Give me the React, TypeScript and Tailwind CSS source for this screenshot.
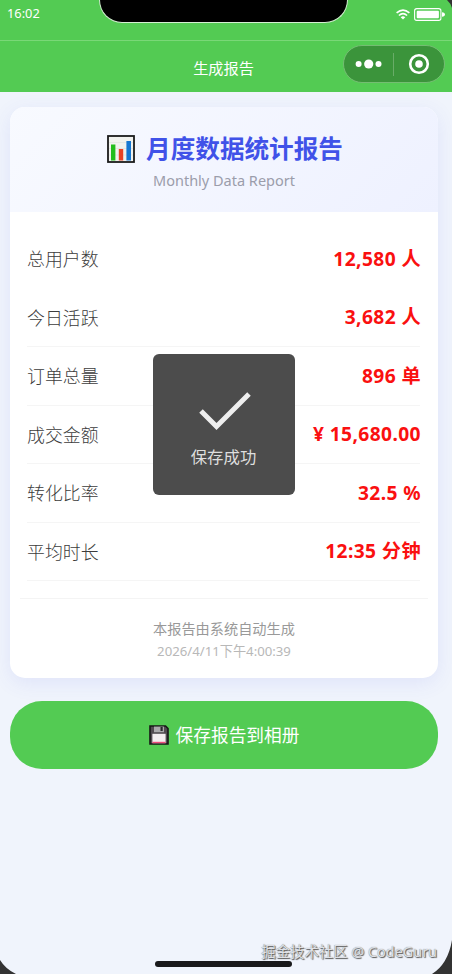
interface Stat { label: string; value: string; line: boolean; }

const stats: Stat[] = [
  { label: '总用户数', value: '12,580 人', line: false },
  { label: '今日活跃', value: '3,682 人', line: true },
  { label: '订单总量', value: '896 单', line: true },
  { label: '成交金额', value: '¥ 15,680.00', line: true },
  { label: '转化比率', value: '32.5 %', line: true },
  { label: '平均时长', value: '12:35 分钟', line: true },
];

function ChartIcon() {
  return (
    <svg className="w-[28px] h-[28px]" viewBox="0 0 28 28">
      <rect x="1" y="1" width="26" height="26" fill="#f1f2ee" stroke="#1b1b1b" strokeWidth="1.8" />
      <path d="M2 7.5h24M2 13.5h24M2 20h24" stroke="#dfe2df" strokeWidth=".7" />
      <rect x="4" y="9.5" width="4.4" height="16" fill="#23bd1c" />
      <rect x="11.8" y="14" width="4.4" height="11.5" fill="#ea4224" />
      <rect x="19.4" y="6" width="4.6" height="19.5" fill="#1677d2" />
    </svg>
  );
}

function DiskIcon() {
  return (
    <svg className="w-[20px] h-[20px]" viewBox="0 0 20 20">
      <path d="M1 1h15.5L19 3.5V19H1z" fill="#514b51" stroke="#171717" strokeWidth="1.6" />
      <rect x="5" y="1.6" width="10" height="5.6" fill="#a9a9ab" />
      <rect x="11.5" y="2" width="2.2" height="4" fill="#29292b" />
      <rect x="3.4" y="8.8" width="13.2" height="9.4" fill="#f3eef0" />
      <rect x="3.4" y="16.8" width="13.2" height="1.4" fill="#ef4c79" />
    </svg>
  );
}

function StatusBar() {
  return (
    <div className="relative flex h-[41px] justify-between border-b border-[#79d877] pl-[7px] pr-[7px] text-white">
      <span className="mt-[4px] text-[12.8px] leading-[19px]">16:02</span>
      <div className="absolute left-[99px] -top-px h-[24px] w-[249px] rounded-b-[23px] border border-t-0 border-[#d4f0d2] bg-black" />
      <div className="mt-[8px] flex h-[13px] items-center gap-[4px]">
        <svg className="w-[14px] h-[11px]" viewBox="0 0 14 11" fill="none" stroke="white" strokeWidth="1.6">
          <path d="M.6 3.9Q7-1.7 13.4 3.9M2.9 6.5Q7 2.9 11.1 6.5" />
          <path d="M4.7 8.2Q7 6.3 9.3 8.2L7 10.5z" fill="white" stroke="none" />
        </svg>
        <svg className="w-[31px] h-[13px]" viewBox="0 0 31 13">
          <rect x=".6" y=".6" width="26.3" height="11.8" rx="2.2" fill="none" stroke="white" strokeWidth="1.1" />
          <rect x="2.7" y="2.8" width="22.2" height="7.4" rx="1" fill="white" />
          <path d="M28 4.2q3 .4 3 2.3t-3 2.3z" fill="white" />
        </svg>
      </div>
    </div>
  );
}

function Capsule() {
  return (
    <div className="absolute right-[7px] top-[4px] flex h-[38px] w-[102px] items-center rounded-full border border-[#74bd72] bg-[#3b943b]">
      <svg className="w-[49px] h-[20px]" viewBox="0 0 49 20" fill="white">
        <circle cx="14.6" cy="10" r="3" />
        <circle cx="24.7" cy="10" r="4.6" />
        <circle cx="34.5" cy="10" r="3" />
      </svg>
      <div className="h-[23px] w-px bg-[#69ac68]" />
      <svg className="ml-[14px] w-[22px] h-[22px]" viewBox="0 0 22 22">
        <circle cx="11" cy="11" r="8.8" fill="none" stroke="white" strokeWidth="2.6" />
        <circle cx="11" cy="11" r="3.8" fill="white" />
      </svg>
    </div>
  );
}

export default function App() {
  return (
    <div className="relative h-[974px] w-[452px] overflow-hidden bg-[#f0f4fc] font-['Noto_Sans','Noto_Sans_CJK_SC',sans-serif]">
      <div className="h-[92px] bg-[#53cb53]">
        <StatusBar />
        <div className="relative flex h-[51px] items-center justify-center pr-[5px] text-[15.2px] text-white">
          <h1 className="mt-[3px]">生成报告</h1>
          <Capsule />
        </div>
      </div>

      <main className="pl-[10px] pr-[14px] pt-[15px]">
        <section className="h-[571px] overflow-hidden rounded-[15px] bg-white shadow-[0_5px_20px_rgba(80,90,230,0.10)]">
          <header className="h-[105px] bg-linear-135 from-[#f8faff] to-[#eef1ff] pt-[24px]">
            <div className="flex h-[36px] items-center justify-center gap-[11px] pl-[2px]">
              <ChartIcon />
              <h2 className="text-[24.6px] font-bold leading-[36px] text-[#4052e8]">月度数据统计报告</h2>
            </div>
            <p className="mt-[3px] text-center text-[14.5px] leading-[20px] text-[#9b9dab]">Monthly Data Report</p>
          </header>

          <div className="pl-[17px] pr-[18px] pt-[18px]">
            {stats.map((s) => (
              <div key={s.label} className={`flex h-[58.5px] items-center justify-between border-b ${s.line ? 'border-[#f5f5f5]' : 'border-transparent'}`}>
                <span className="pt-[2px] text-[17.9px] font-light text-[#3c3c3c]">{s.label}</span>
                <span className="-mr-[1px] pt-px text-[19.2px] font-bold tracking-[0.4px] text-[#fa1010]">{s.value}</span>
              </div>
            ))}
          </div>

          <footer className="mx-[10px] mt-[17px] border-t border-[#f4f4f4] pt-[18px] text-center">
            <p className="text-[14.2px] leading-[23px] text-[#999]">本报告由系统自动生成</p>
            <p className="text-[13.2px] leading-[23px] text-[#b8b8b8]">2026/4/11下午4:00:39</p>
          </footer>
        </section>

        <button className="mt-[23px] flex h-[68px] w-full items-center justify-center gap-[7px] rounded-[32px] bg-[#53cb53] text-[17.7px] text-white">
          <DiskIcon />
          <span className="pt-px">保存报告到相册</span>
        </button>
      </main>

      <div className="absolute left-[153px] top-[354px] flex h-[141px] w-[142px] flex-col items-center rounded-[6px] bg-[#4c4c4c] pt-[37px]">
        <svg className="ml-[2px] w-[52px] h-[40px]" viewBox="0 0 52 40">
          <path d="M2 20L17.5 35.500L50 3" fill="none" stroke="#eee" strokeWidth="5" />
        </svg>
        <p className="mt-[14px] pr-px text-[16.4px] leading-[24px] text-[#dedede]">保存成功</p>
      </div>

      <div className="absolute left-[155px] top-[961px] h-[6px] w-[137px] rounded-[3px] bg-[#19191b]" />
      <div className="absolute right-[15px] top-[941px] whitespace-nowrap text-[14.4px] leading-[22px] text-[#dfe1e6] [text-shadow:1px_1px_1px_#555,0_0_1px_#777]">掘金技术社区 @ CodeGuru</div>

      {/* device frame corners */}
      <svg className="absolute right-0 top-0 h-[8px] w-[5px]" viewBox="0 0 5 8"><path d="M0 0H5V8Q3.5 3 0 0z" fill="#333" /></svg>
      <svg className="absolute bottom-0 left-0 h-[14px] w-[16px]" viewBox="0 0 16 14"><path d="M0 0Q5.500 9 16 14H0z" fill="#333" /></svg>
      <svg className="absolute bottom-0 right-0 h-[34px] w-[20px]" viewBox="0 0 20 34"><path d="M20 0Q16 24 0 34H20z" fill="#333" /></svg>
    </div>
  );
}
